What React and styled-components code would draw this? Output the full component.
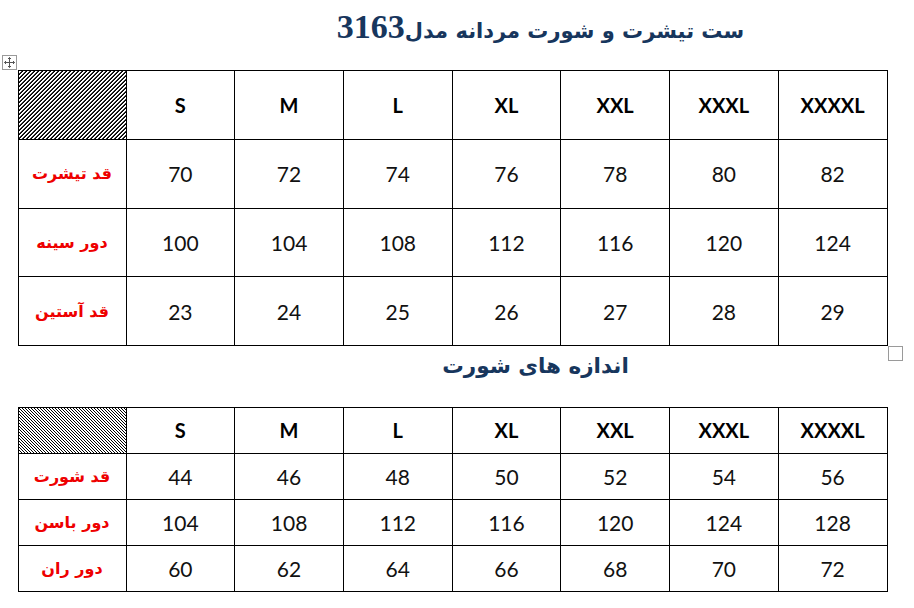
import React from "react";
import styled, { createGlobalStyle } from "styled-components";

const Global = createGlobalStyle`
  html, body { margin: 0; padding: 0; background: #fff; }
  body { width: 914px; height: 608px; overflow: hidden; font-family: Lato, "Liberation Sans", sans-serif; }
`;

const Page = styled.div`
  position: relative;
  width: 914px;
  height: 608px;
  padding-left: 18px;
  box-sizing: border-box;
`;

const Title = styled.div`
  height: ${(p) => p.$h}px;
  width: 869px;
  text-align: center;
  padding-left: ${(p) => p.$shift}px;
  padding-top: ${(p) => p.$top}px;
  box-sizing: border-box;
  direction: rtl;
  color: #17365d;
  font-family: "DejaVu Sans", sans-serif;
  font-weight: bold;
  font-size: ${(p) => p.$size}px;
  line-height: 40px;
  white-space: nowrap;
`;

const Num = styled.span`
  font-family: "Liberation Serif", "DejaVu Serif", serif;
  font-weight: bold;
  font-size: 34px;
`;

const Table = styled.table`
  border-collapse: collapse;
  table-layout: fixed;
  width: 870px;
  margin-left: -0.5px;
`;

const Cell = styled.td`
  border: 1px solid #000;
  height: ${(p) => p.$h}px;
  padding: 0;
  text-align: center;
  vertical-align: middle;
  font-family: Lato, "Liberation Sans", sans-serif;
  font-size: 21px;
  color: #111;
  box-sizing: border-box;
`;

const HeadCell = styled(Cell)`
  font-weight: bold;
  font-size: 20px;
  color: #000;
`;

const HatchCell = styled(Cell)`
  position: relative;
  overflow: hidden;
`;

const Hatch = styled.svg`
  position: absolute;
  inset: 0;
  width: 100%;
  height: 100%;
  display: block;
`;

const LabelCell = styled(Cell)`
  direction: rtl;
  color: #ee0000;
  font-family: "DejaVu Sans", sans-serif;
  font-weight: bold;
  font-size: 16px;
`;

const MoveHandle = styled.div`
  position: absolute;
  left: 2px;
  top: 55px;
  width: 13px;
  height: 13px;
  border: 1px solid #9a9a9a;
  background: #fff;
  display: flex;
  align-items: center;
  justify-content: center;
`;

const ResizeHandle = styled.div`
  position: absolute;
  left: 888px;
  top: 346px;
  width: 13px;
  height: 13px;
  border: 1px solid #9a9a9a;
  background: #fff;
`;

const sizes = ["S", "M", "L", "XL", "XXL", "XXXL", "XXXXL"];

const HatchFill = ({ id, kind }) => (
  <Hatch shapeRendering="crispEdges">
    <defs>
      {kind === "forward" ? (
        <pattern id={id} width="4" height="4" patternUnits="userSpaceOnUse">
          <rect x="3" y="0" width="1" height="1" fill="#000" />
          <rect x="2" y="1" width="1" height="1" fill="#000" />
          <rect x="1" y="2" width="1" height="1" fill="#000" />
          <rect x="0" y="3" width="1" height="1" fill="#000" />
          <rect x="2" y="0" width="1" height="1" fill="#333" />
          <rect x="1" y="1" width="1" height="1" fill="#333" />
          <rect x="0" y="2" width="1" height="1" fill="#333" />
          <rect x="3" y="3" width="1" height="1" fill="#333" />
        </pattern>
      ) : (
        <pattern id={id} width="3" height="3" patternUnits="userSpaceOnUse">
          <rect x="0" y="0" width="1" height="1" fill="#000" />
          <rect x="1" y="1" width="1" height="1" fill="#000" />
          <rect x="2" y="2" width="1" height="1" fill="#000" />
        </pattern>
      )}
    </defs>
    <rect width="100%" height="100%" fill={`url(#${id})`} />
  </Hatch>
);

const SizeTable = ({ rows, rowH, hatch }) => (
  <Table>
    <colgroup>
      <col style={{ width: "108px" }} />
      {sizes.map((s) => (
        <col key={s} />
      ))}
    </colgroup>
    <tbody>
      <tr>
        <HatchCell $h={rowH}>
          <HatchFill id={`hatch-${hatch}`} kind={hatch} />
        </HatchCell>
        {sizes.map((s) => (
          <HeadCell key={s} $h={rowH}>
            {s}
          </HeadCell>
        ))}
      </tr>
      {rows.map(([label, values]) => (
        <tr key={label}>
          <LabelCell $h={rowH}>{label}</LabelCell>
          {values.map((v, i) => (
            <Cell key={i} $h={rowH}>
              {v}
            </Cell>
          ))}
        </tr>
      ))}
    </tbody>
  </Table>
);

const shirtRows = [
  ["قد تیشرت", [70, 72, 74, 76, 78, 80, 82]],
  ["دور سینه", [100, 104, 108, 112, 116, 120, 124]],
  ["قد آستین", [23, 24, 25, 26, 27, 28, 29]],
];

const shortRows = [
  ["قد شورت", [44, 46, 48, 50, 52, 54, 56]],
  ["دور باسن", [104, 108, 112, 116, 120, 124, 128]],
  ["دور ران", [60, 62, 64, 66, 68, 70, 72]],
];

export default function App() {
  return (
    <>
      <Global />
      <Page>
        <Title $h={70} $shift={176} $size={21} $top={7}>
          ست تیشرت و شورت مردانه مدل<Num>3163</Num>
        </Title>
        <SizeTable rows={shirtRows} rowH={68.75} hatch="forward" />
        <Title $h={61} $shift={166} $size={21.5} $top={0}>
          اندازه های شورت
        </Title>
        <SizeTable rows={shortRows} rowH={45.9} hatch="back" />
        <MoveHandle>
          <svg width="11" height="11" viewBox="0 0 11 11" fill="none" stroke="#555" strokeWidth="1">
            <path d="M5.5 0.5v10M0.5 5.5h10" />
            <path d="M4 2l1.5-1.5L7 2M4 9l1.5 1.5L7 9M2 4L0.5 5.5 2 7M9 4l1.5 1.5L9 7" />
          </svg>
        </MoveHandle>
        <ResizeHandle />
      </Page>
    </>
  );
}
